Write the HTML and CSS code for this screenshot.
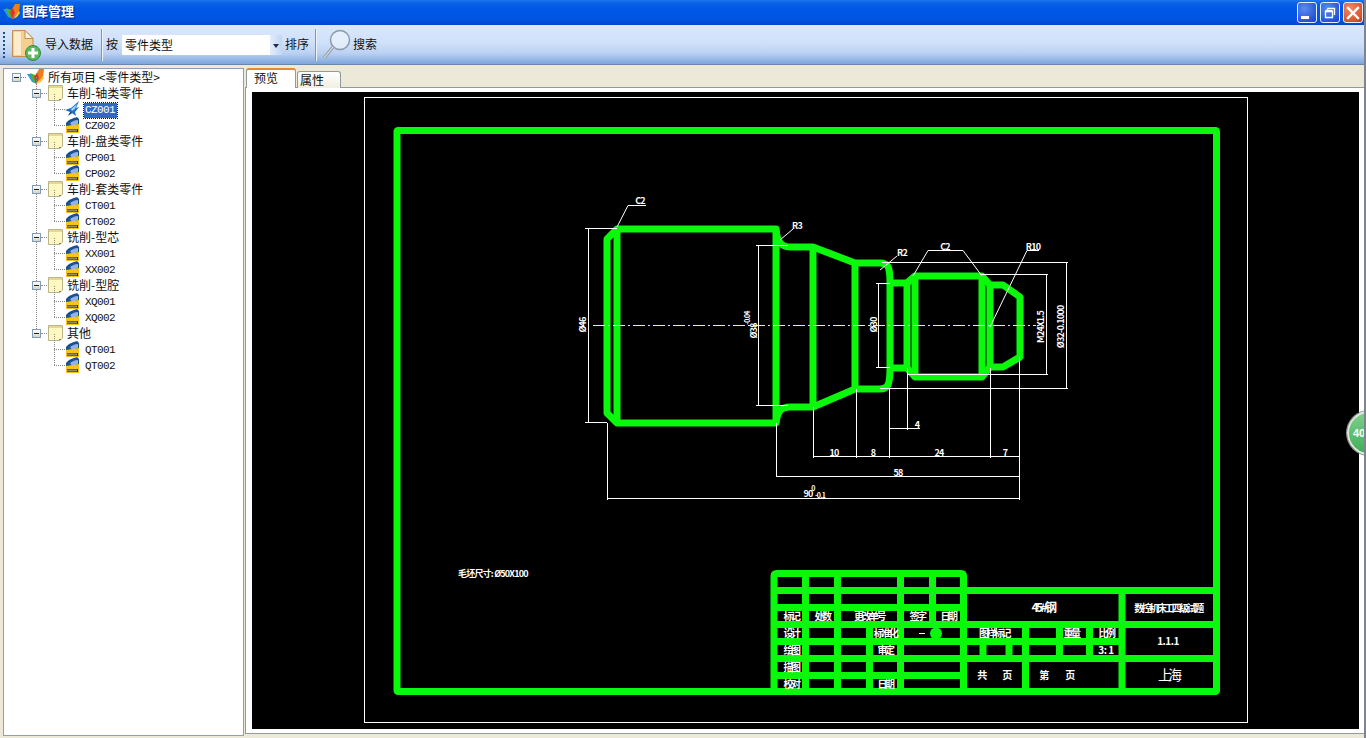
FILE: index.html
```html
<!DOCTYPE html>
<html lang="zh">
<head>
<meta charset="utf-8">
<title>图库管理</title>
<link rel="stylesheet" href="styles.css">
</head>
<body>
<svg class="defs" width="0" height="0" aria-hidden="true">
  <defs>
    <symbol id="logo" viewBox="0 0 18 16">
      <path d="M0 5 L5 5 L10 15 L5 13 Z" fill="#2f9ae0"/>
      <path d="M3 4 L8 6 L10 15 L6 12 Z" fill="#49b52e"/>
      <path d="M9 15 L8 7 L12 0 L17 0 L16 8 Z" fill="#ef7d1a"/>
      <path d="M9 15 L7 8 L10 4 L12 9 Z" fill="#e2322a"/>
      <path d="M10 15 L16 7 L17 9 L14 13 Z" fill="#f7c62f"/>
    </symbol>
    <symbol id="note" viewBox="0 0 17 16">
      <path d="M1.500 .500 H15.500 V13 L13 15.500 H1.500 Z" fill="#fdf8c0" stroke="#b9b48a"/>
      <path d="M2 1 H15 V3 H2 Z" fill="#e6d98d"/>
      <path d="M12 14 H14 V15 H12 Z" fill="#8b8450"/>
    </symbol>
    <symbol id="dwg" viewBox="0 0 15 16">
      <path d="M1 6 C4 2 9 1 12 0 L14 2 V10 H1 Z" fill="#1f4f8f"/>
      <path d="M5 6 C8 4 10 3 13 3 V7 L7 9 Z" fill="#8fb6e2"/>
      <path d="M1 9 C5 8 10 8 14 7 V16 H1 Z" fill="#f4c518"/>
      <path d="M2 12 H13 V15 H2 Z" fill="#333"/>
      <path d="M3 12.500 V14.500 M5 12.500 V14.500 M7 12.500 V14.500 M9 12.500 V14.500 M11 12.500 V14.500" stroke="#f4e9a0" stroke-width="1" fill="none"/>
    </symbol>
    <symbol id="bird" viewBox="0 0 15 16">
      <path d="M0 9 L6 7 L14 0 L11 7 L14 6 L10 11 L11 15 L7 12 L3 15 L5 11 Z" fill="#1d6ec7"/>
      <path d="M6 8 L12 3 L10 8 L7 10 Z" fill="#9fd1f5"/>
      <path d="M3 14 L6 11 L7 12 Z" fill="#16365f"/>
    </symbol>
  </defs>
</svg>

<div class="window">
  <header class="titlebar">
    <svg class="title-logo"><use href="#logo"/></svg>
    <span class="title-text">图库管理</span>
    <div class="winbtns">
      <button class="winbtn min" aria-label="最小化"><span class="min-bar"></span></button>
      <button class="winbtn max" aria-label="还原">
        <svg width="12" height="12" viewBox="0 0 12 12"><path d="M3.500 1.500 H10.500 V8 M3.500 1.500 V3 M1.500 4.500 H8.500 V10.500 H1.500 Z" fill="none" stroke="#fff" stroke-width="1.300"/><path d="M1.500 4 H8.500" stroke="#fff" stroke-width="2"/></svg>
      </button>
      <button class="winbtn close" aria-label="关闭">
        <svg width="14" height="14" viewBox="0 0 14 14"><path d="M2 2 L12 12 M12 2 L2 12" stroke="#fff" stroke-width="2.400" stroke-linecap="square"/></svg>
      </button>
    </div>
  </header>

  <div class="toolbar">
    <span class="grip"></span>
    <svg class="tb-import" width="30" height="32" viewBox="0 0 30 32">
      <path d="M1.500 1.500 H14 L22 9.500 V27.500 H1.500 Z" fill="#f5cf8f" stroke="#c58f4c"/>
      <path d="M3 3 H10 V26 H3 Z" fill="#fdeccb"/>
      <path d="M14 1.500 V9.500 H22 Z" fill="#fff5e2" stroke="#c58f4c"/>
      <circle cx="22" cy="24" r="7.500" fill="#58b95f" stroke="#2f8a3a"/>
      <path d="M22 19 V29 M17 24 H27" stroke="#fff" stroke-width="3"/>
    </svg>
    <span class="tb-label import-label">导入数据</span>
    <span class="sep"></span>
    <span class="tb-label by-label">按</span>
    <div class="combo">
      <span class="combo-value">零件类型</span>
      <span class="combo-arrow"></span>
    </div>
    <span class="tb-label sort-label">排序</span>
    <span class="sep sep2"></span>
    <svg class="tb-search" width="29" height="32" viewBox="0 0 29 32">
      <circle cx="18" cy="11" r="9.500" fill="#f0f6fd" fill-opacity=".6" stroke="#8d9aa8" stroke-width="1.500"/>
      <path d="M11 18 L2 29" stroke="#9aa4ae" stroke-width="3.500"/>
      <path d="M11 18 L2 29" stroke="#e8ecf0" stroke-width="1"/>
    </svg>
    <span class="tb-label">搜索</span>
  </div>

  <main class="main">
    <nav class="tree">
      <div class="row r0">
        <span class="exp"></span><span class="conn c0"></span>
        <svg class="ic logo"><use href="#logo"/></svg>
        <span class="lb">所有项目 &lt;零件类型&gt;</span>
      </div>
      <div class="roots">
        <div class="node">
          <div class="row r1"><span class="exp"></span><span class="conn"></span><svg class="ic note"><use href="#note"/></svg><span class="lb">车削-轴类零件</span></div>
          <div class="kids">
            <div class="row r2"><span class="conn"></span><svg class="ic dwg"><use href="#bird"/></svg><span class="lb code sel">CZ001</span></div>
            <div class="row r2"><span class="conn"></span><svg class="ic dwg"><use href="#dwg"/></svg><span class="lb code">CZ002</span></div>
          </div>
        </div>
        <div class="node">
          <div class="row r1"><span class="exp"></span><span class="conn"></span><svg class="ic note"><use href="#note"/></svg><span class="lb">车削-盘类零件</span></div>
          <div class="kids">
            <div class="row r2"><span class="conn"></span><svg class="ic dwg"><use href="#dwg"/></svg><span class="lb code">CP001</span></div>
            <div class="row r2"><span class="conn"></span><svg class="ic dwg"><use href="#dwg"/></svg><span class="lb code">CP002</span></div>
          </div>
        </div>
        <div class="node">
          <div class="row r1"><span class="exp"></span><span class="conn"></span><svg class="ic note"><use href="#note"/></svg><span class="lb">车削-套类零件</span></div>
          <div class="kids">
            <div class="row r2"><span class="conn"></span><svg class="ic dwg"><use href="#dwg"/></svg><span class="lb code">CT001</span></div>
            <div class="row r2"><span class="conn"></span><svg class="ic dwg"><use href="#dwg"/></svg><span class="lb code">CT002</span></div>
          </div>
        </div>
        <div class="node">
          <div class="row r1"><span class="exp"></span><span class="conn"></span><svg class="ic note"><use href="#note"/></svg><span class="lb">铣削-型芯</span></div>
          <div class="kids">
            <div class="row r2"><span class="conn"></span><svg class="ic dwg"><use href="#dwg"/></svg><span class="lb code">XX001</span></div>
            <div class="row r2"><span class="conn"></span><svg class="ic dwg"><use href="#dwg"/></svg><span class="lb code">XX002</span></div>
          </div>
        </div>
        <div class="node">
          <div class="row r1"><span class="exp"></span><span class="conn"></span><svg class="ic note"><use href="#note"/></svg><span class="lb">铣削-型腔</span></div>
          <div class="kids">
            <div class="row r2"><span class="conn"></span><svg class="ic dwg"><use href="#dwg"/></svg><span class="lb code">XQ001</span></div>
            <div class="row r2"><span class="conn"></span><svg class="ic dwg"><use href="#dwg"/></svg><span class="lb code">XQ002</span></div>
          </div>
        </div>
        <div class="node">
          <div class="row r1"><span class="exp"></span><span class="conn"></span><svg class="ic note"><use href="#note"/></svg><span class="lb">其他</span></div>
          <div class="kids">
            <div class="row r2"><span class="conn"></span><svg class="ic dwg"><use href="#dwg"/></svg><span class="lb code">QT001</span></div>
            <div class="row r2"><span class="conn"></span><svg class="ic dwg"><use href="#dwg"/></svg><span class="lb code">QT002</span></div>
          </div>
        </div>
      </div>
    </nav>

    <section class="viewer">
      <div class="tabs">
        <span class="tab active">预览</span>
        <span class="tab">属性</span>
      </div>
      <div class="tabpanel">
        <svg class="drawing" width="1107" height="637" viewBox="252 92 1107 637">
          <rect x="252" y="92" width="1107" height="637" fill="#000"/>
          <rect class="thin" x="364.500" y="97.500" width="883" height="625"/>

          <rect class="gr7" x="397" y="130.500" width="819.500" height="561" rx="1"/>

          <!-- part outline -->
          <path class="gr7" d="M607 239 L617 229 H776 C777 240 780 247 790 247 H813 L855 263 H880 C888 263 890 266 890 283 H907 L915 276 H982 L990 285 H1003 L1020 297 V357 L1003 367 H990 L982 377 H915 L907 368 H890 C890 385 888 389 880 389 H855 L813 407 H790 C780 407 777 413 776 423 H617 L607 413 Z"/>
          <path class="gr7" d="M617 229 V423 M776 229 V423 M813 247 V407 M855 263 V389 M890 283 V368 M907 283 V368 M915 276 V377 M982 276 V377 M990 285 V368"/>

          <!-- centre line -->
          <line class="center" x1="593" y1="325.500" x2="1036" y2="325.500"/>

          <!-- dimensions -->
          <path class="thin" d="M585 228.500 H617 M585 422.500 H607 M588.500 228 V422
            M617 227 L628 205.500 H646
            M780 240 L793 229
            M756 245.500 H788 M756 405.500 H788 M758.500 245 V405
            M880 270 L897 256
            M882 262.500 H1068 M880 388.500 H1068 M1066.500 262 V388
            M980 274.500 H1048 M907 374.500 H1048 M1046.500 274 V374
            M876 283.500 H890 M876 367.500 H890 M878.500 283 V367
            M913 276 L928 250.500 H963 L982 276
            M990 327 L1027 250.500 H1039
            M813.500 407 V458 M856.500 389 V458 M889.500 389 V458 M907.500 368 V430 M990.500 368 V458 M1019.500 357 V500 M776.500 423 V477 M607.500 423 V500
            M813 456.500 H1019 M889 428.500 H920 M776 476.500 H1019 M607 498.500 H1019"/>

          <text class="dim" x="640" y="204">C2</text>
          <text class="dim" x="797" y="229">R3</text>
          <text class="dim" x="902" y="256">R2</text>
          <text class="dim" x="945" y="250">C2</text>
          <text class="dim" x="1033" y="250">R10</text>
          <text class="dim" x="834" y="456">10</text>
          <text class="dim" x="873" y="456">8</text>
          <text class="dim" x="939" y="456">24</text>
          <text class="dim" x="1005" y="456">7</text>
          <text class="dim" x="898" y="476">58</text>
          <text class="dim" x="917" y="428">4</text>
          <text class="dim" x="808" y="497">90</text>
          <text class="dim sm" x="820" y="498">-0.1</text>
          <text class="dim sm" x="813" y="491">0</text>
          <text class="dim" transform="rotate(-90 586 325)" x="586" y="325">Ø46</text>
          <text class="dim" transform="rotate(-90 757 331)" x="757" y="331">Ø38</text>
          <text class="dim sm" transform="rotate(-90 750 318)" x="750" y="318">-0.04</text>
          <text class="dim" transform="rotate(-90 877 325)" x="877" y="325">Ø30</text>
          <text class="dim" transform="rotate(-90 1044 327)" x="1044" y="327">M24X1.5</text>
          <text class="dim" transform="rotate(-90 1064 327)" x="1064" y="327">Ø32-0.1000</text>

          <text class="dim left" x="458" y="577">毛坯尺寸: Ø50X100</text>

          <!-- title block -->
          <path class="gr7" d="M774 691 V576 Q774 573.500 777 573.500 H961 Q963.500 573.500 963.500 576 V691
            M774 590.500 H1216 M774 607.500 H963 M774 624.500 H1216 M774 641.500 H1122 M774 658.500 H1216 M774 675.500 H963
            M805.500 573 V691 M837.500 573 V691 M900.500 573 V691 M932.500 573 V624 M869.500 624 V691
            M1122 590 V691 M1025.500 624 V691 M1059.500 624 V658 M1089.500 624 V658 M983 641 V658 M1009 641 V658"/>

          <text class="cell" x="791" y="620">标记</text>
          <text class="cell" x="822" y="620">处数</text>
          <text class="cell" x="869" y="620">更改单号</text>
          <text class="cell" x="917" y="620">签字</text>
          <text class="cell" x="948" y="620">日期</text>
          <text class="cell" x="791" y="637">设计</text>
          <text class="cell" x="885" y="637">标准化</text>
          <line class="white-dash" x1="919" y1="633.500" x2="925" y2="633.500"/>
          <circle class="blob" cx="936" cy="633.500" r="6"/>
          <text class="cell" x="994" y="637">图样标记</text>
          <text class="cell" x="1071" y="637">重量</text>
          <text class="cell" x="1106" y="637">比例</text>
          <text class="cell" x="791" y="654">绘图</text>
          <text class="cell" x="885" y="654">审定</text>
          <text class="cell loose" x="1106" y="654">3: 1</text>
          <text class="cell" x="791" y="671">描图</text>
          <text class="cell" x="791" y="688">校对</text>
          <text class="cell" x="885" y="688">日期</text>
          <text class="cell big" x="1043" y="612">45#钢</text>
          <text class="cell" x="1168" y="612">数控机床工四级试题</text>
          <text class="cell loose" x="1168" y="645">1.1.1</text>
          <text class="cell big2" x="1168" y="680">上海</text>
          <text class="cell loose" x="982" y="679">共</text>
          <text class="cell loose" x="1007" y="679">页</text>
          <text class="cell loose" x="1044" y="679">第</text>
          <text class="cell loose" x="1070" y="679">页</text>
        </svg>
      </div>
    </section>
  </main>

  <div class="badge">40</div>
</div>
</body>
</html>
```
FILE: styles.css
```css
* { box-sizing: border-box; }
html, body { margin: 0; padding: 0; width: 1366px; height: 738px; overflow: hidden; }
body {
  background: #ece9d8;
  font-family: "Noto Sans CJK SC", "Liberation Sans", sans-serif;
  font-size: 12px;
  color: #111;
}
.defs { position: absolute; }
.window {
  position: relative;
  width: 1366px;
  height: 738px;
  display: flex;
  flex-direction: column;
  border-right: 2px solid #7d8590;
  overflow: hidden;
}

/* title bar */
.titlebar {
  height: 25px;
  flex: none;
  display: flex;
  align-items: center;
  padding: 0 3px 0 3px;
  background: linear-gradient(#1a78ee 0, #0a62e6 3px, #0058e6 9px, #0054e2 20px, #0046d0 25px);
  margin-right: -2px;
}
.title-logo { width: 18px; height: 16px; flex: none; margin-bottom: 2px; }
.title-text {
  margin-left: 1px;
  margin-bottom: 4px;
  color: #fff;
  font-size: 13px;
  font-weight: 700;
  text-shadow: 1px 1px 1px #04208a;
}
.winbtns { margin-left: auto; display: flex; gap: 3px; }
.winbtn {
  width: 20px;
  height: 21px;
  padding: 0;
  border: 1px solid #e6eefc;
  border-radius: 3px;
  display: flex;
  align-items: center;
  justify-content: center;
  background: radial-gradient(circle at 35% 30%, #5b8cf0, #2a55d8 70%, #1e3fb8);
}
.winbtn.close { background: radial-gradient(circle at 35% 30%, #ee8a68, #d8552e 70%, #b63a18); }
.min-bar { width: 8px; height: 3px; background: #fff; margin: 9px 5px 0 0; }

/* toolbar */
.toolbar {
  height: 40px;
  flex: none;
  display: flex;
  align-items: center;
  padding-left: 3px;
  background: linear-gradient(#dbe8fd 0, #cfe0fa 45%, #bcd2f3 70%, #7fa7dd 97%, #5f6f85 100%);
}
.grip {
  width: 2px;
  height: 27px;
  flex: none;
  background: repeating-linear-gradient(#2a4a78 0 2px, transparent 2px 4px);
}
.tb-import { flex: none; margin-left: 6px; }
.tb-label { flex: none; margin-left: 5px; margin-bottom: 2px; line-height: 1; }
.import-label { margin-left: 4px; }
.sep {
  width: 1px;
  height: 32px;
  flex: none;
  margin-left: 8px;
  background: #7c97bd;
  box-shadow: 1px 0 0 #eef4fd;
}
.by-label { margin-left: 4px; }
.combo {
  width: 160px;
  height: 20px;
  flex: none;
  margin-left: 4px;
  display: flex;
  align-items: center;
  background: #fff;
  position: relative;
}
.combo-value { margin-left: 3px; margin-bottom: 2px; }
.combo-arrow {
  margin-left: auto;
  width: 12px;
  height: 20px;
  background: linear-gradient(90deg, #e3ecfb, #c2d5f2);
  display: flex;
  align-items: center;
  justify-content: center;
}
.combo-arrow::after {
  content: "";
  border: 3px solid transparent;
  border-top: 4px solid #1c2c4c;
  margin-top: 4px;
}
.sort-label { margin-left: 3px; }
.sep2 { margin-left: 6px; }
.tb-search { flex: none; margin-left: 6px; }
.toolbar .tb-search + .tb-label { margin-left: 2px; }

/* main */
.main {
  flex: 1;
  min-height: 0;
  display: flex;
  padding-top: 3px;
  padding-left: 3px;
}

/* tree */
.tree {
  width: 241px;
  height: 668px;
  flex: none;
  background: #fff;
  border: 1px solid #8f9fae;
  padding-top: 0;
}
.row {
  height: 16px;
  display: flex;
  align-items: center;
  white-space: nowrap;
}
.r0 { padding-left: 8px; }
.r1 { padding-left: 28px; }
.r2 { padding-left: 50px; }
.exp {
  width: 9px;
  height: 9px;
  flex: none;
  border: 1px solid #7f9db9;
  background: linear-gradient(#fff, #d8d4c4) ;
  position: relative;
}
.exp::after {
  content: "";
  position: absolute;
  left: 1px;
  top: 3px;
  width: 5px;
  height: 1px;
  background: #222;
}
.conn {
  width: 9px;
  height: 1px;
  flex: none;
  border-top: 1px dotted #888;
}
.c0 { width: 5px; }
.r1 .conn { width: 6px; }
.r2 .conn { width: 11px; }
.ic { flex: none; }
.logo { width: 18px; height: 16px; margin-left: 1px; }
.note { width: 17px; height: 16px; margin-left: 0; }
.dwg { width: 15px; height: 16px; margin-left: 0; }
.lb { line-height: 15px; margin-bottom: 2px; }
.r0 .lb { margin-left: 3px; }
.r1 .lb { margin-left: 3px; }
.code {
  font-family: "Liberation Mono", monospace;
  font-size: 11px;
  letter-spacing: -0.6px;
  margin-left: 4px;
  margin-bottom: 0;
  margin-top: 3px;
  padding: 0 2px 0 1px;
}
.sel {
  background: #316ac5;
  color: #fff;
  outline: 1px dotted #111;
  outline-offset: 0;
  margin-left: 4px;
}
.roots { position: relative; }
.roots::before {
  content: "";
  position: absolute;
  left: 32px;
  top: -8px;
  bottom: 40px;
  border-left: 1px dotted #888;
}
.node { position: relative; }
.kids { position: relative; }
.kids::before {
  content: "";
  position: absolute;
  left: 50px;
  top: -7px;
  height: 31px;
  border-left: 1px dotted #888;
}

/* viewer */
.viewer {
  width: 1119px;
  margin-left: 1px;
  flex: none;
  display: flex;
  flex-direction: column;
}
.tabs {
  height: 20px;
  flex: none;
  display: flex;
  align-items: flex-end;
  padding-left: 1px;
  position: relative;
  z-index: 1;
  margin-bottom: -1px;
}
.tab {
  width: 44px;
  height: 17px;
  margin-left: 1px;
  border: 1px solid #919b9c;
  border-bottom: 0;
  border-radius: 3px 3px 0 0;
  background: linear-gradient(#fff, #f1efe2);
  display: flex;
  align-items: center;
  padding-left: 2px;
  line-height: 1;
}
.tab.active {
  width: 50px;
  height: 20px;
  margin-left: 0;
  background: #fff;
  border-top: 2px solid #e68b2c;
  padding-left: 7px;
  padding-bottom: 3px;
}
.tabpanel {
  width: 1119px;
  height: 647px;
  padding: 4px;
  padding-left: 6px;
  background: #fff;
  border: 1px solid #919b9c;
  border-right: 0;
}
.drawing { display: block; }

/* drawing */
.thin { fill: none; stroke: #fff; stroke-width: 1; }
.gr7 { fill: none; stroke: #0af80a; stroke-width: 7; stroke-linejoin: round; }
.center { stroke: #f4f48a; stroke-width: 1; stroke-dasharray: 12 3 2 3; }
.dim {
  fill: #fff;
  font-family: "Noto Sans CJK SC", "Liberation Sans", sans-serif;
  font-size: 9px;
  font-weight: 700;
  letter-spacing: -0.8px;
  text-anchor: middle;
}
.dim.left { text-anchor: start; }
.sm { font-size: 7px; }
.cell {
  fill: #fff;
  font-family: "Noto Sans CJK SC", "Liberation Sans", sans-serif;
  font-size: 10px;
  font-weight: 700;
  letter-spacing: -2.5px;
  text-anchor: middle;
}
.cell.loose { letter-spacing: -0.5px; }
.cell.big { font-size: 12px; letter-spacing: -2.5px; }
.cell.big2 { font-size: 14px; letter-spacing: -4px; font-weight: 400; }
.white-dash { stroke: #fff; stroke-width: 1; }
.blob { fill: #0af80a; }

/* floating badge */
.badge {
  position: absolute;
  left: 1347px;
  top: 411px;
  width: 44px;
  height: 44px;
  border-radius: 50%;
  border: 2px solid #dfe8df;
  box-shadow: 0 0 0 1px #8a948a;
  background: linear-gradient(#7fd08d, #3fae58);
  color: #fff;
  font-family: "Liberation Sans", sans-serif;
  font-size: 11px;
  font-weight: 700;
  line-height: 40px;
  padding-left: 4px;
}
```
